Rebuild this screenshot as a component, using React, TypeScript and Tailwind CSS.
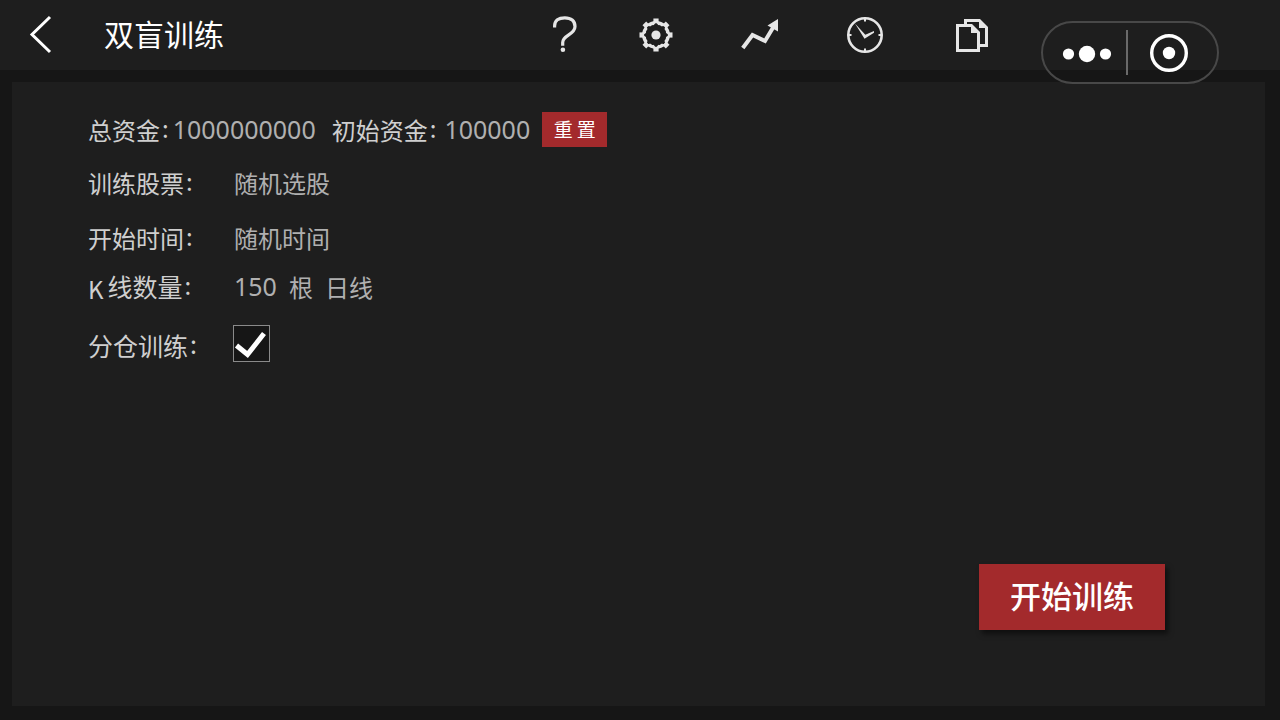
import { useState } from 'react';
import type { ReactNode } from 'react';

const CJK = "font-['Noto_Sans_CJK_SC',sans-serif]";
const DIGITS = "font-['Noto_Sans','Noto_Sans_CJK_SC',sans-serif]";

function Caption({ children }: { children: ReactNode }) {
  return (
    <span className="flex items-center gap-0.5 whitespace-nowrap text-[#cfcfcf]">
      <span>{children}</span>
      <span className="pb-1">:</span>
    </span>
  );
}

function Row({ label, className, children }: { label: ReactNode; className: string; children: ReactNode }) {
  return (
    <div className={`flex min-h-9 items-center ${className}`}>
      <dt className="w-[146px] shrink-0">
        <Caption>{label}</Caption>
      </dt>
      <dd className="text-[#b0b0b0]">{children}</dd>
    </div>
  );
}

function BackIcon() {
  return (
    <svg width="24" height="40" viewBox="0 0 24 40" fill="none" stroke="#fff" strokeWidth="3" aria-hidden="true">
      <path d="M22 2 4 19.500 22 37" />
    </svg>
  );
}

function HelpIcon() {
  return (
    <svg width="40" height="40" viewBox="0 0 40 40" fill="none" stroke="#e6e6e6" strokeWidth="3.2" aria-hidden="true">
      <path d="M10.600 12.400V11C10.600 5.500 14.500 2.800 20.800 2.800S31 6 31 11.500C31 20 18.700 19.500 18.700 27.500V30.800" />
      <circle cx="18.900" cy="34.800" r="2.300" fill="#e6e6e6" stroke="none" />
    </svg>
  );
}

const TEETH = [0, 45, 90, 135, 180, 225, 270, 315];

function GearIcon() {
  return (
    <svg width="40" height="40" viewBox="-20 -20 40 40" fill="none" aria-hidden="true">
      <circle r="12.200" stroke="#e6e6e6" strokeWidth="3.400" />
      {TEETH.map((angle) => (
        <g key={angle} transform={`rotate(${angle})`}>
          <rect x="-2.600" y="-16.500" width="5.200" height="5" fill="#e6e6e6" />
          <circle cy="-10.400" r="1.700" fill="#1e1e1e" />
          <path d="M-3.600 -10.400 Q0 -15.800 3.600 -10.400" stroke="#e6e6e6" strokeWidth="2" />
        </g>
      ))}
      <circle r="4.600" fill="#e6e6e6" />
    </svg>
  );
}

function TrendIcon() {
  return (
    <svg width="40" height="40" viewBox="0 0 40 40" fill="none" aria-hidden="true">
      <path d="M2.800 33 12.500 20 25 26 34 11" stroke="#e6e6e6" strokeWidth="4" />
      <path d="M38 4v12.500L27.500 10.500Z" fill="#e6e6e6" />
    </svg>
  );
}

function ClockIcon() {
  return (
    <svg width="40" height="40" viewBox="0 0 40 40" fill="none" aria-hidden="true">
      <circle cx="20" cy="20" r="16.700" stroke="#e6e6e6" strokeWidth="2.600" />
      <path d="M20 3v3.500M20 37v-3.500M3 20h3.500M37 20h-3.500" stroke="#e6e6e6" strokeWidth="2" />
      <path d="M10 8.500 20.300 19.800 29 16v1.800L19.500 23.800Z" fill="#e6e6e6" />
    </svg>
  );
}

function CopyIcon() {
  return (
    <svg width="40" height="40" viewBox="0 0 40 40" fill="none" aria-hidden="true">
      <path
        fillRule="evenodd"
        d="M4 9h16l8 8v20H4ZM7 12v22h18V18h-6v-6Z"
        fill="#e6e6e6"
      />
      <path d="M12 9V4h16l8 8v20h-8v-3h5V13h-6V7H15v2Z" fill="#e6e6e6" />
    </svg>
  );
}

const TOOLS = [
  { name: '帮助', icon: <HelpIcon /> },
  { name: '设置', icon: <GearIcon /> },
  { name: '走势', icon: <TrendIcon /> },
  { name: '历史', icon: <ClockIcon /> },
  { name: '复制', icon: <CopyIcon /> },
];

function Capsule() {
  return (
    <div className="absolute top-[21px] right-[61px] flex h-[63px] w-[178px] items-center rounded-full border-2 border-[#484848]">
      <button type="button" aria-label="更多" className="flex h-full w-[83px] items-center justify-center pt-0.5 pl-1">
        <svg width="50" height="18" viewBox="0 0 50 18" fill="#fff" aria-hidden="true">
          <circle cx="6.500" cy="9" r="5.600" />
          <circle cx="25" cy="9" r="8.200" />
          <circle cx="43.500" cy="9" r="5.600" />
        </svg>
      </button>
      <span className="h-[45px] w-0.5 bg-[#6a6a6a]" />
      <button type="button" aria-label="关闭" className="flex h-full flex-1 items-center justify-center pr-2">
        <svg width="40" height="40" viewBox="0 0 40 40" fill="none" aria-hidden="true">
          <circle cx="20" cy="20" r="17.300" stroke="#fff" strokeWidth="3.400" />
          <circle cx="20" cy="20" r="6.200" fill="#fff" />
        </svg>
      </button>
    </div>
  );
}

export default function App() {
  const [split, setSplit] = useState(true);

  return (
    <div className={`relative flex min-h-screen flex-col bg-[#161616] text-2xl ${CJK}`}>
      <header className="flex h-[70px] items-center justify-between bg-[#1e1e1e] pr-[288px] pl-7">
        <div className="flex items-center gap-[52px]">
          <button type="button" aria-label="返回">
            <BackIcon />
          </button>
          <h1 className="pb-1 text-[30px] leading-10 whitespace-nowrap text-white">双盲训练</h1>
        </div>
        <nav className="grid grid-cols-[92px_104px_105px_107px_40px]">
          {TOOLS.map((tool) => (
            <button key={tool.name} type="button" aria-label={tool.name} className="w-10">
              {tool.icon}
            </button>
          ))}
        </nav>
      </header>

      <main className="mt-3 mr-[15px] mb-3.5 ml-3 flex flex-1 flex-col justify-between bg-[#1e1e1e] pt-[30px] pr-[100px] pb-[76px] pl-[76px]">
        <section>
          <div className="flex h-[35px] items-center">
            <div className="flex items-center gap-1">
              <Caption>总资金</Caption>
              <span className={`text-[25px] text-[#b0b0b0] ${DIGITS}`}>1000000000</span>
            </div>
            <div className="ml-4 flex items-center gap-2">
              <Caption>初始资金</Caption>
              <span className={`text-[25px] text-[#b0b0b0] ${DIGITS}`}>100000</span>
            </div>
            <button
              type="button"
              className="ml-3 flex h-[35px] w-[65px] items-center justify-center gap-1 bg-[#a32a2c] pb-0.5 text-[19px] text-white"
            >
              <span>重</span>
              <span>置</span>
            </button>
          </div>

          <dl>
            <Row label="训练股票" className="mt-[18px]">
              随机选股
            </Row>
            <Row label="开始时间" className="mt-[19px]">
              随机时间
            </Row>
            <Row
              className="mt-[13px]"
              label={
                <span className="flex items-center gap-1">
                  <span className="pt-1">K</span>
                  <span className="text-[25px]">线数量</span>
                </span>
              }
            >
              <span className="flex items-center gap-3">
                <span className={`text-[25px] ${DIGITS}`}>150</span>
                <span>根</span>
                <span>日线</span>
              </span>
            </Row>
          </dl>

          <div className="mt-[18px] flex items-center">
            <label htmlFor="split" className="w-[145px] shrink-0 pt-1 text-[25px] leading-8">
              <Caption>分仓训练</Caption>
            </label>
            <span className="grid h-[37px] w-[37px]">
              <input
                id="split"
                type="checkbox"
                checked={split}
                onChange={(event) => setSplit(event.target.checked)}
                className="peer col-start-1 row-start-1 h-full w-full appearance-none border border-[#8a8a8a] bg-[#161616]"
              />
              <svg
                className="pointer-events-none invisible col-start-1 row-start-1 peer-checked:visible"
                width="37"
                height="37"
                viewBox="0 0 37 37"
                fill="none"
                stroke="#fff"
                strokeWidth="5"
                aria-hidden="true"
              >
                <path d="M3.500 20.500 14.500 29.500 31 8.500" />
              </svg>
            </span>
          </div>
        </section>

        <button
          type="button"
          className="h-[66px] w-[186px] self-end bg-[#a32a2c] pb-1 text-[31px] font-medium text-white shadow-[3px_4px_5px_rgba(0,0,0,0.5)]"
        >
          开始训练
        </button>
      </main>

      <Capsule />
    </div>
  );
}
